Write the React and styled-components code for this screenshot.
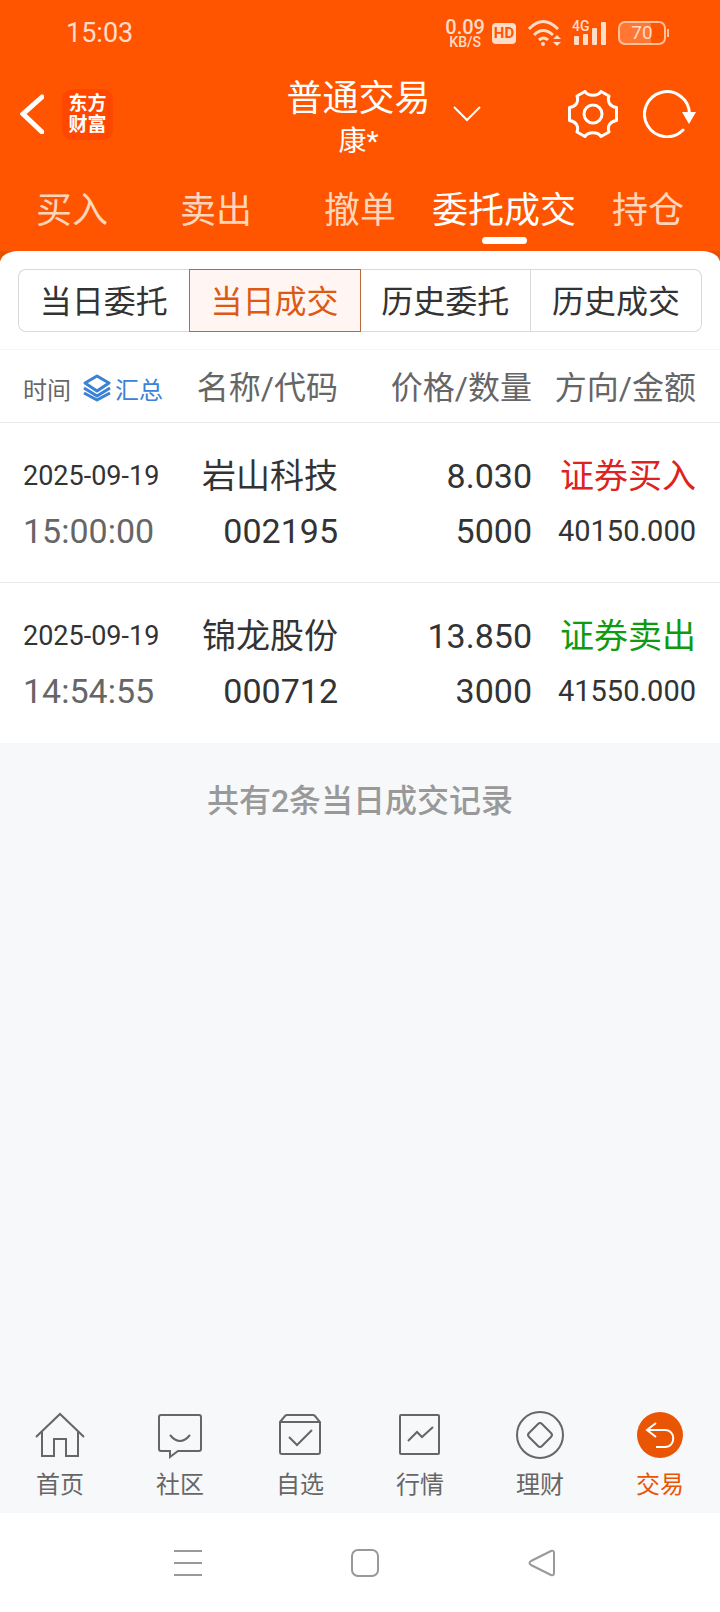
import React from 'react';
import styled, {createGlobalStyle, css} from 'styled-components';

const TABS = ['买入', '卖出', '撤单', '委托成交', '持仓'];
const SEGMENTS = ['当日委托', '当日成交', '历史委托', '历史成交'];

const DEALS = [
    {
        date: '2025-09-19',
        time: '15:00:00',
        name: '岩山科技',
        code: '002195',
        price: '8.030',
        amount: '5000',
        side: 'buy',
        direction: '证券买入',
        total: '40150.000',
    },
    {
        date: '2025-09-19',
        time: '14:54:55',
        name: '锦龙股份',
        code: '000712',
        price: '13.850',
        amount: '3000',
        side: 'sell',
        direction: '证券卖出',
        total: '41550.000',
    },
];

const NAV = [
    {
        label: '首页',
        icon: (
            <g>
                <path d="M1 25L25 2l24 23"/>
                <path d="M7 20v24h12V27h12v17h12V20"/>
            </g>
        ),
    },
    {
        label: '社区',
        icon: (
            <g>
                <path d="M6 3h38q2 0 2 2v32q0 2-2 2H23l-8 6v-6H6q-2 0-2-2V5q0-2 2-2z"/>
                <path d="M15 23q10 12 20 0"/>
            </g>
        ),
    },
    {
        label: '自选',
        icon: (
            <g>
                <path d="M5 10l5-6q1-1 2-1h26q1 0 2 1l5 6v30q0 2-2 2H7q-2 0-2-2zM5 10h40"/>
                <path d="M14 25l8 8 15-15"/>
            </g>
        ),
    },
    {
        label: '行情',
        icon: (
            <g>
                <rect x="5" y="3" width="39" height="39" rx="1"/>
                <path d="M13 29l9-9 5 5 11-10"/>
            </g>
        ),
    },
    {
        label: '理财',
        icon: (
            <g>
                <circle cx="25" cy="23" r="23"/>
                <path d="M23 12q2-2 4 0l9 9q2 2 0 4l-9 9q-2 2-4 0l-9-9q-2-2 0-4z"/>
            </g>
        ),
    },
    {
        label: '交易',
        active: true,
        icon: (
            <g>
                <circle cx="25" cy="23" r="23" fill="#ea5504" stroke="none"/>
                <path d="M21 11l-9 7 9 7M12 18h18c11 0 11 17 0 17h-9" stroke="#fff"/>
            </g>
        ),
    },
];

const StatusIcons = () => (
    <StyledStatusIcons>
        <StyledSpeed>
            <b>0.09</b>
            <small>KB/S</small>
        </StyledSpeed>
        <StyledHd>HD</StyledHd>
        <svg width="34" height="28" viewBox="0 0 34 28" fill="none" stroke="#ffdcc8" strokeWidth="3">
            <path d="M1 10Q15 -5 30 10M6 16q9-9 19 0M11 21q5-4 9 0"/>
            <circle cx="15" cy="25" r="2" fill="#ffdcc8" stroke="none"/>
            <path d="M25 20l4-4 4 4zM25 23l4 4 4-4z" fill="#ffdcc8" stroke="none"/>
        </svg>
        <StyledSignal>
            <span>4G</span>
            <svg width="34" height="24" viewBox="0 0 34 24" fill="#ffdcc8">
                <rect x="2" y="15" width="5" height="9" rx="1"/>
                <rect x="11" y="13" width="5" height="11" rx="1"/>
                <rect x="20" y="7" width="5" height="17" rx="1"/>
                <rect x="29" y="1" width="5" height="23" rx="1"/>
            </svg>
        </StyledSignal>
        <StyledBattery>70</StyledBattery>
    </StyledStatusIcons>
);

const App = () => {
    return (
        <StyledPage>
            <GlobalStyle/>
            <StyledHeader>
                <StyledStatus>
                    <StyledClock>15:03</StyledClock>
                    <StatusIcons/>
                </StyledStatus>
                <StyledAppBar>
                    <StyledSide>
                        <StyledIconButton aria-label="返回">
                            <svg width="24" height="40" viewBox="0 0 24 40" fill="none" stroke="#fff" strokeWidth="5" strokeLinecap="round">
                                <path d="M22 3L3 20l19 18"/>
                            </svg>
                        </StyledIconButton>
                        <StyledLogo>东方<br/>财富</StyledLogo>
                    </StyledSide>
                    <StyledTitle>
                        <h1>普通交易</h1>
                        <p>康*</p>
                    </StyledTitle>
                    <StyledTools>
                        <StyledIconButton aria-label="切换账户">
                            <svg width="28" height="16" viewBox="0 0 28 16" fill="none" stroke="#fff" strokeWidth="2">
                                <path d="M1 1l13 13L27 1"/>
                            </svg>
                        </StyledIconButton>
                        <StyledToolGroup>
                            <StyledIconButton aria-label="设置">
                                <svg width="50" height="48" viewBox="0 0 50 48" fill="none" stroke="#fff" strokeWidth="3" strokeLinejoin="round">
                                    <path d="M17 1.500C20 6.500 30 6.500 33 1.500L41 6C39 12 42 16.500 48.500 17.500V30.500C42 31.500 39 36 41 42L33 46.500C30 41.500 20 41.500 17 46.500L9 42C11 36 8 31.500 1.500 30.500V17.500C8 16.500 11 12 9 6Z"/>
                                    <circle cx="25" cy="24" r="9"/>
                                </svg>
                            </StyledIconButton>
                            <StyledIconButton aria-label="刷新">
                                <svg width="54" height="48" viewBox="0 0 54 48" fill="none" stroke="#fff" strokeWidth="3" strokeLinecap="round">
                                    <path d="M46.500 24A22.500 22.500 0 1 0 40 40"/>
                                    <path d="M39 22h14l-7 12z" fill="#fff" stroke="none"/>
                                </svg>
                            </StyledIconButton>
                        </StyledToolGroup>
                    </StyledTools>
                </StyledAppBar>
                <StyledTabs>
                    {TABS.map((tab) => (
                        <StyledTab key={tab} $active={tab === '委托成交'}>{tab}</StyledTab>
                    ))}
                </StyledTabs>
            </StyledHeader>

            <StyledMain>
                <StyledPanelEdge>
                    <StyledSegments>
                        {SEGMENTS.map((segment) => (
                            <StyledSegment key={segment} $active={segment === '当日成交'}>{segment}</StyledSegment>
                        ))}
                    </StyledSegments>
                </StyledPanelEdge>
                <StyledTable>
                    <colgroup>
                        <col width="172"/>
                        <col width="166"/>
                        <col width="194"/>
                        <col width="188"/>
                    </colgroup>
                    <thead>
                        <tr>
                            <th>
                                <StyledTimeHead>
                                    时间
                                    <StyledSummary>
                                        <svg width="28" height="28" viewBox="0 0 28 28" fill="none" stroke="#3a82d6" strokeWidth="3" strokeLinejoin="round">
                                            <path d="M14 2l12 7-12 8L2 9z"/>
                                            <path d="M1 14l13 8 13-8M1 19l13 7 13-7"/>
                                        </svg>
                                        汇总
                                    </StyledSummary>
                                </StyledTimeHead>
                            </th>
                            <th>名称/代码</th>
                            <th>价格/数量</th>
                            <th>方向/金额</th>
                        </tr>
                    </thead>
                    <tbody>
                        {DEALS.map((deal) => (
                            <tr key={deal.code}>
                                <td>
                                    <StyledLine $size={27}>{deal.date}</StyledLine>
                                    <StyledLine $color="#666">{deal.time}</StyledLine>
                                </td>
                                <td>
                                    <StyledLine>{deal.name}</StyledLine>
                                    <StyledLine>{deal.code}</StyledLine>
                                </td>
                                <td>
                                    <StyledLine>{deal.price}</StyledLine>
                                    <StyledLine>{deal.amount}</StyledLine>
                                </td>
                                <td>
                                    <StyledLine $color={deal.side === 'buy' ? '#dd2222' : '#109a10'}>{deal.direction}</StyledLine>
                                    <StyledLine $size={29}>{deal.total}</StyledLine>
                                </td>
                            </tr>
                        ))}
                    </tbody>
                </StyledTable>
                <StyledCount>共有{DEALS.length}条当日成交记录</StyledCount>
            </StyledMain>

            <StyledNav>
                {NAV.map((item) => (
                    <StyledNavItem href="#" key={item.label} $active={item.active}>
                        <svg width="50" height="46" viewBox="0 0 50 46" fill="none" stroke="#666" strokeWidth="2" overflow="visible">
                            {item.icon}
                        </svg>
                        {item.label}
                    </StyledNavItem>
                ))}
            </StyledNav>

            <StyledSystemBar>
                <StyledIconButton aria-label="菜单">
                    <svg width="28" height="28" viewBox="0 0 28 28" stroke="#999" strokeWidth="2">
                        <path d="M0 2h28M0 14h28M0 26h28"/>
                    </svg>
                </StyledIconButton>
                <StyledIconButton aria-label="主屏幕">
                    <svg width="28" height="28" viewBox="0 0 28 28" fill="none" stroke="#999" strokeWidth="2">
                        <rect x="1" y="1" width="26" height="26" rx="6"/>
                    </svg>
                </StyledIconButton>
                <StyledIconButton aria-label="后退">
                    <svg width="28" height="28" viewBox="0 0 28 28" fill="none" stroke="#999" strokeWidth="2" strokeLinejoin="round">
                        <path d="M3 12L23 2q3-1 3 2v20q0 3-3 2L3 16q-3-2 0-4z"/>
                    </svg>
                </StyledIconButton>
            </StyledSystemBar>
        </StyledPage>
    );
};

const GlobalStyle = createGlobalStyle`
  * {
    box-sizing: border-box;
  }

  body {
    margin: 0;
    font-family: Roboto, "Noto Sans CJK SC", sans-serif;
    color: #333;
  }

  h1, p {
    margin: 0;
    font-weight: 400;
  }

  button {
    padding: 0;
    border: none;
    background: transparent;
    font: inherit;
    color: inherit;
  }

  svg {
    display: block;
  }
`
const StyledPage = styled.div`
  min-height: 100vh;
  display: flex;
  flex-direction: column;
  background: #f7f8fa;
`

const StyledHeader = styled.header`
  background: #ff5500;
  color: #fff;
`

const StyledStatus = styled.div`
  height: 64px;
  padding: 2px 54px 0 66px;
  display: flex;
  align-items: center;
  justify-content: space-between;
  color: #ffdcc8;
`

const StyledClock = styled.span`
  font-size: 27px;
`

const StyledStatusIcons = styled.div`
  display: flex;
  align-items: center;
`

const StyledSpeed = styled.div`
  margin-right: 7px;
  display: flex;
  flex-direction: column;
  align-items: center;

  b {
    font-size: 20px;
    line-height: 17px;
    font-weight: 500;
  }

  small {
    font-size: 14px;
    line-height: 12px;
    font-weight: 500;
  }
`

const StyledHd = styled.span`
  width: 24px;
  margin-right: 12px;
  border-radius: 4px;
  background: #ffdcc8;
  color: #ff5500;
  font-size: 15px;
  line-height: 21px;
  font-weight: 700;
  text-align: center;
`

const StyledSignal = styled.div`
  position: relative;
  margin: 0 12px 0 10px;

  span {
    position: absolute;
    top: -1px;
    left: 0;
    font-size: 14px;
    line-height: 12px;
    font-weight: 500;
  }
`

const StyledBattery = styled.div`
  position: relative;
  width: 48px;
  border: 2px solid #ffc09a;
  border-radius: 7px;
  background: linear-gradient(90deg, #ff7733 70%, transparent 70%);
  font-size: 19px;
  line-height: 20px;
  text-align: center;

  &::after {
    content: "";
    position: absolute;
    top: 6px;
    right: -5px;
    width: 2px;
    height: 8px;
    background: #ffc09a;
  }
`

const StyledAppBar = styled.div`
  height: 100px;
  padding: 0 23px 0 20px;
  display: grid;
  grid-template-columns: 1fr auto 1fr;
  align-items: center;
`

const StyledSide = styled.div`
  display: flex;
  align-items: center;
  gap: 18px;
`

const StyledIconButton = styled.button`
  display: block;
`

const StyledLogo = styled.div`
  width: 51px;
  padding: 4px 0 5px;
  border-radius: 10px;
  background: #ff4700;
  font-size: 19px;
  line-height: 21px;
  font-weight: 700;
  text-align: center;
`

const StyledTitle = styled.div`
  padding-top: 12px;
  text-align: center;

  h1 {
    font-size: 36px;
    line-height: 44px;
  }

  p {
    font-size: 28px;
    line-height: 42px;
  }
`

const StyledTools = styled.div`
  padding-left: 22px;
  display: flex;
  align-items: center;
  justify-content: space-between;
`

const StyledToolGroup = styled.div`
  display: flex;
  gap: 25px;
`

const StyledTabs = styled.nav`
  height: 87px;
  padding-top: 21px;
  display: flex;
`

const StyledTab = styled.button`
  flex: 1 1 0;
  min-width: 0;
  display: flex;
  flex-direction: column;
  align-items: center;
  font-size: 36px;
  line-height: 52px;
  white-space: nowrap;
  color: #ffd5bb;

  ${({$active}) => $active && css`
    color: #fff;

    &::after {
      content: "";
      width: 45px;
      height: 7px;
      border-radius: 4px;
      background: #fff;
    }
  `}
`

const StyledMain = styled.main`
  flex: 1;
  background: linear-gradient(#e65100 16px, transparent 16px);
`

const StyledPanelEdge = styled.div`
  padding: 18px 18px 17px;
  border-radius: 18px 18px 0 0 / 12px 12px 0 0;
  border-bottom: 1px solid #f5f5f5;
  background: #fff;
`

const StyledSegments = styled.div`
  display: flex;
`

const StyledSegment = styled.button`
  flex: 1;
  height: 63px;
  padding-top: 2px;
  border: 1px solid #d8d9db;
  font-size: 32px;
  line-height: 58px;

  & + & {
    border-left-width: 0;
  }

  &:first-child {
    border-right: none;
    border-radius: 8px 0 0 8px;
  }

  &:last-child {
    border-left-width: 1px;
    border-radius: 0 8px 8px 0;
  }

  ${({$active}) => $active && css`
    && {
      border: 1px solid #b8683a;
    }
    background: #fff5f2;
    color: #dd5a14;
  `}
`

const StyledTable = styled.table`
  width: 100%;
  table-layout: fixed;
  border-spacing: 0;
  background: #fff;

  th, td {
    padding: 0;
    border-bottom: 1px solid #e9e9e9;
    text-align: right;
    white-space: nowrap;
  }

  th {
    height: 73px;
    padding-bottom: 2px;
    font-size: 32px;
    font-weight: 400;
    color: #666;
  }

  td {
    height: 160px;
    padding-top: 2px;
  }

  tbody tr:last-child td {
    border-bottom-color: #fff;
  }

  th:first-child, td:first-child {
    padding-left: 23px;
    text-align: left;
  }

  th:last-child, td:last-child {
    padding-right: 24px;
  }
`

const StyledTimeHead = styled.div`
  padding-top: 6px;
  display: flex;
  align-items: center;
  gap: 12px;
  font-size: 24px;
`

const StyledSummary = styled.button`
  display: flex;
  align-items: center;
  gap: 4px;
  color: #3a82d6;
`

const StyledLine = styled.div`
  font-size: ${({$size}) => $size || 34}px;
  line-height: 55px;
  color: ${({$color}) => $color || '#333'};
`

const StyledCount = styled.p`
  padding-top: 34px;
  font-size: 32px;
  line-height: 48px;
  font-weight: 500;
  text-align: center;
  color: #999;
`

const StyledNav = styled.nav`
  height: 101px;
  display: flex;
`

const StyledNavItem = styled.a`
  flex: 1;
  display: flex;
  flex-direction: column;
  align-items: center;
  gap: 9px;
  font-size: 24px;
  line-height: 36px;
  text-decoration: none;
  color: ${({$active}) => $active ? '#ea5504' : '#666'};
`

const StyledSystemBar = styled.footer`
  height: 99px;
  padding: 0 89px 0 99px;
  display: flex;
  align-items: center;
  justify-content: space-around;
  background: #fff;
`

export default App;
